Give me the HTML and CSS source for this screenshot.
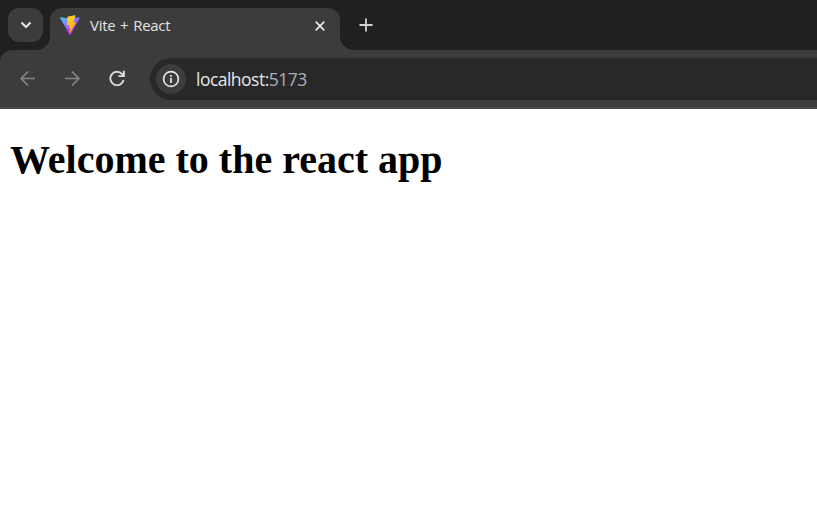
FILE: index.html
```html
<!DOCTYPE html>
<html lang="en">
<head>
<meta charset="utf-8">
<title>Vite + React</title>
<link rel="stylesheet" href="styles.css">
</head>
<body>
<header class="browser">
  <div class="tabstrip">
    <button class="tab-search" aria-label="Search tabs">
      <svg width="12" height="8" viewBox="0 0 12 8"><path d="M1.500 1.500 6 6l4.500-4.500" fill="none" stroke="#e8e8e8" stroke-width="2"/></svg>
    </button>
    <div class="tab">
      <svg class="favicon" width="20" height="21" viewBox="0 0 20 21">
        <defs>
          <linearGradient id="shield" x1="0" y1="0" x2=".6" y2="1"><stop stop-color="#41d1ff"/><stop offset=".8" stop-color="#bd34fe"/></linearGradient>
          <linearGradient id="bolt" x1=".3" y1="0" x2=".6" y2="1"><stop stop-color="#ffd52f"/><stop offset="1" stop-color="#ffa800"/></linearGradient>
        </defs>
        <path d="M19.700 3 10.500 19.800q-.5.700-1 0L.2 3q-.3-.8.600-.8L10 3.800l9.100-1.600q.9 0 .6.800z" fill="url(#shield)"/>
        <path d="M15 .2 8 1.500l-.5.500L7 9.800l.4.500 2-.4-.6 3.200.4.500 1.300-.4-.9 4.600.6.200 5.400-10.300-.4-.6-2.100.4L15.500.7z" fill="url(#bolt)"/>
      </svg>
      <span class="tab-title">Vite + React</span>
      <svg class="close" width="10" height="10" viewBox="0 0 10 10"><path d="M.7.7l8.600 8.600M9.300.7.7 9.300" stroke="#e8e8e8" stroke-width="1.700"/></svg>
    </div>
    <svg class="new-tab" width="14" height="14" viewBox="0 0 14 14"><path d="M7 .5v13M.5 7h13" stroke="#d4d4d4" stroke-width="1.800"/></svg>
  </div>
  <nav class="toolbar">
    <svg class="back" width="16" height="16" viewBox="0 0 16 16"><path d="M15 8.500H1.700M8 1.500 1.200 8.500 8 15.500" fill="none" stroke="#858585" stroke-width="1.700"/></svg>
    <svg class="forward" width="16" height="16" viewBox="0 0 16 16"><path d="M1 8.500h13.300M8 1.500l6.800 7-6.800 7" fill="none" stroke="#858585" stroke-width="1.700"/></svg>
    <svg class="reload" width="16" height="16" viewBox="0 0 16 16"><path d="M14.600 10A6.700 6.700 0 1 1 13.200 4.200L14.300 5.500M14.900.8v5.300H9.400" fill="none" stroke="#dadada" stroke-width="1.900"/></svg>
    <div class="address">
      <span class="site-info">
        <svg width="18" height="18" viewBox="0 0 18 18"><circle cx="9" cy="9" r="7.400" fill="none" stroke="#e6e6e6" stroke-width="1.700"/><path d="M9 8v5M9 5v1.800" stroke="#e6e6e6" stroke-width="1.800"/></svg>
      </span>
      <span class="url">localhost:<span class="port">5173</span></span>
    </div>
  </nav>
</header>
<main><h1>Welcome to the react app</h1></main>
</body>
</html>
```
FILE: styles.css
```css
* { box-sizing: border-box; }
body { margin: 0; background: #fff; overflow: hidden; }
svg { display: block; flex: none; }
.browser { background: #1f2120; font-family: "Open Sans", "Noto Sans", sans-serif; }
.tabstrip { display: flex; height: 50px; padding: 8px 0 0 8px; }
.tab-search {
  display: flex; align-items: center; justify-content: center;
  width: 35px; height: 34px; margin-right: 7px; padding: 0;
  border: 0; border-radius: 11px; background: #3c3c3c;
}
.tab {
  position: relative; display: flex; align-items: center;
  width: 290px; height: 42px; padding: 0 15px 7px 10px;
  border-radius: 12px 12px 0 0; background: #3c3c3c;
}
.tab::before, .tab::after {
  content: ""; position: absolute; bottom: 0; width: 13px; height: 13px;
}
.tab::before { right: 100%; background: radial-gradient(circle at 0 0, transparent 12.5px, #3c3c3c 13px); }
.tab::after { left: 100%; background: radial-gradient(circle at 100% 0, transparent 12.5px, #3c3c3c 13px); }
.tab-title { margin: -1px 0 0 10px; color: #e3e3e3; font-size: 15px; letter-spacing: -.3px; word-spacing: 1.2px; white-space: nowrap; }
.close { margin-left: auto; }
.new-tab { margin: 10px 0 0 19px; }
.toolbar {
  display: flex; align-items: center; height: 59px; padding: 0 0 1px 20px;
  border-bottom: 2px solid #4a4a4a; border-radius: 12px 0 0; background: #3c3c3c;
}
.forward { margin-left: 28px; }
.reload { margin-left: 29px; }
.address {
  display: flex; align-items: center; flex: 1; height: 42px; margin: 2px 0 0 25px; padding-left: 6px;
  border-radius: 21px 0 0 21px; background: #282828;
}
.site-info {
  display: flex; align-items: center; justify-content: center;
  width: 30px; height: 30px; border-radius: 50%; background: #3c3c3c;
}
.url { margin-left: 10px; color: #e6e6e6; font-size: 17.5px; letter-spacing: -.52px; }
.port { color: #adb0b8; }
main { padding: 28px 10px; }
h1 { margin: 0; color: #000; font: bold 40px/46px "Liberation Serif", serif; white-space: nowrap; }
```
